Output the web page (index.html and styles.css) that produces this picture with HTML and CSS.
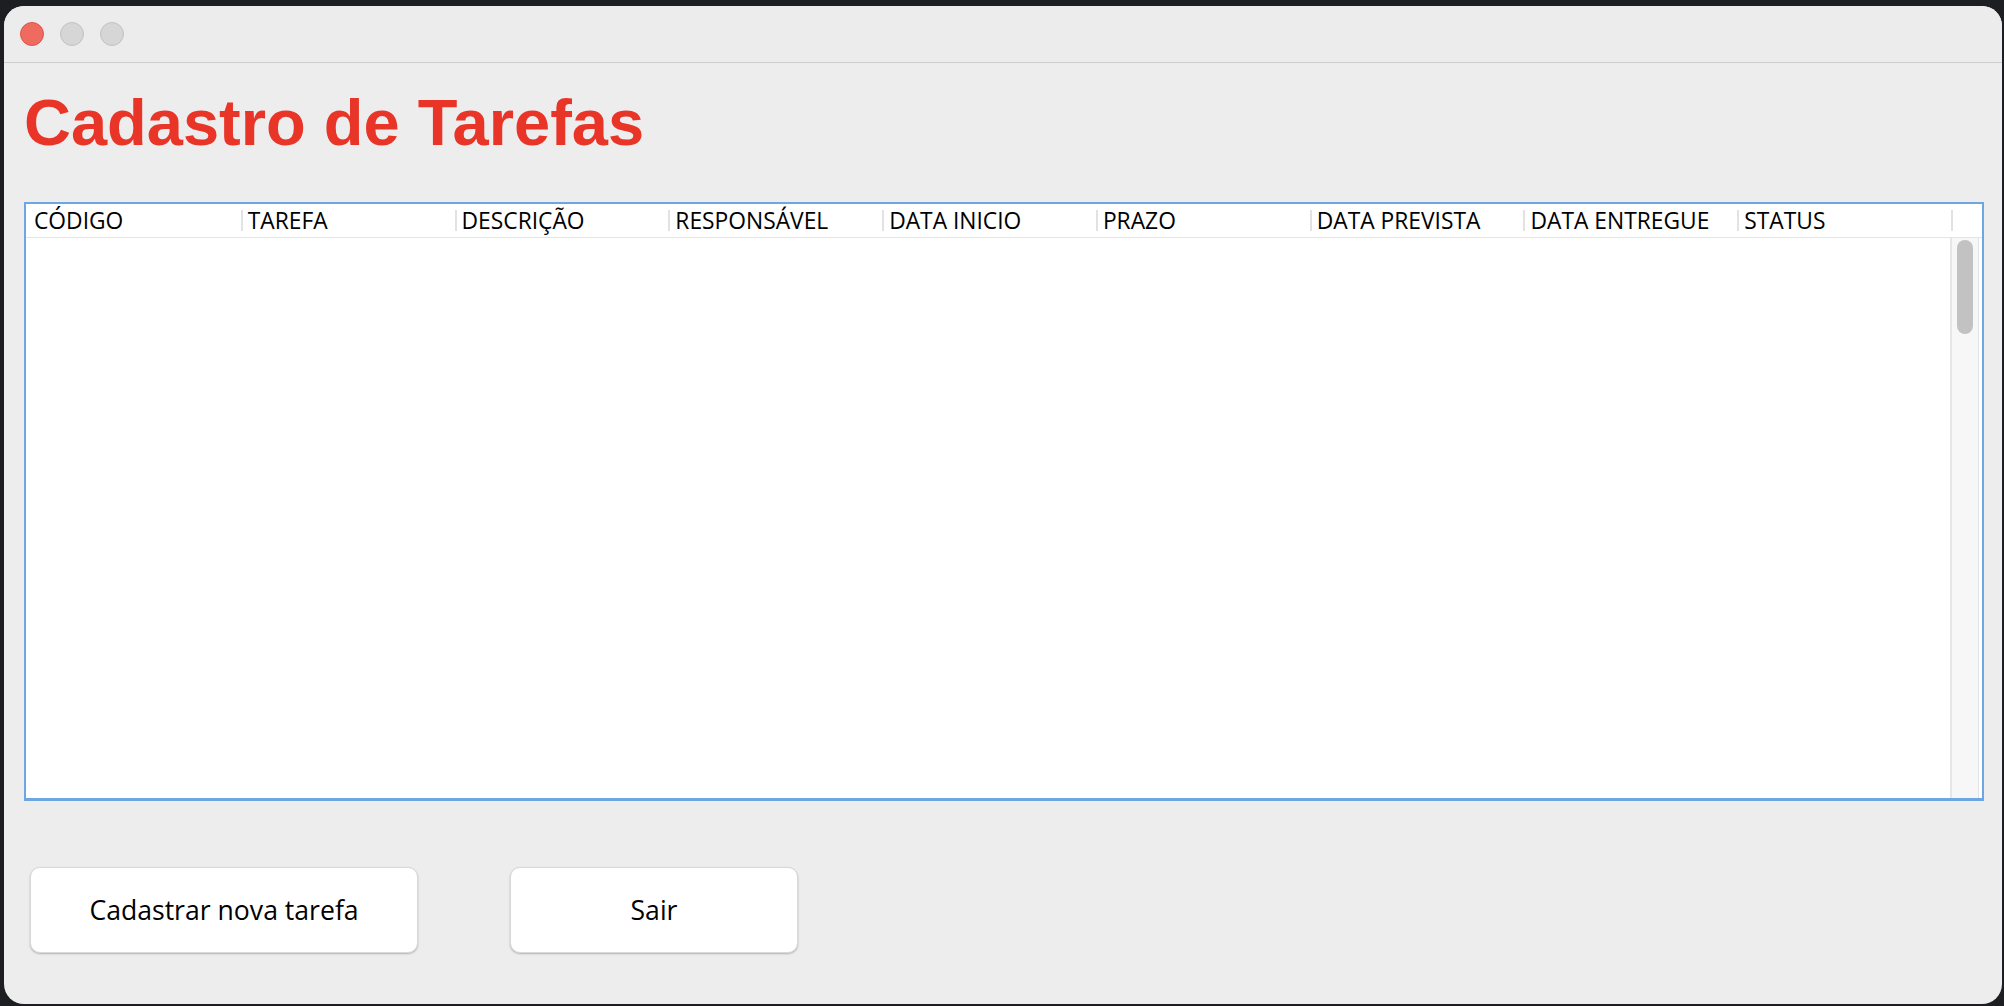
FILE: index.html
```html
<!DOCTYPE html>
<html lang="pt">
<head>
<meta charset="utf-8">
<title>Cadastro de Tarefas</title>
<link rel="stylesheet" href="styles.css">
</head>
<body>
<div class="window">
  <div class="titlebar">
    <span class="light light-red"></span>
    <span class="light"></span>
    <span class="light"></span>
  </div>
  <div class="content">
    <h1 class="title">Cadastro de Tarefas</h1>
    <div class="table">
      <div class="thead">
        <div class="th">CÓDIGO</div>
        <div class="th">TAREFA</div>
        <div class="th">DESCRIÇÃO</div>
        <div class="th">RESPONSÁVEL</div>
        <div class="th">DATA INICIO</div>
        <div class="th">PRAZO</div>
        <div class="th">DATA PREVISTA</div>
        <div class="th">DATA ENTREGUE</div>
        <div class="th">STATUS</div>
        <div class="th corner"></div>
      </div>
      <div class="tbody">
        <div class="rows"></div>
        <div class="track"><div class="thumb"></div></div>
      </div>
    </div>
    <div class="buttons">
      <button class="btn btn-new">Cadastrar nova tarefa</button>
      <button class="btn btn-exit">Sair</button>
    </div>
  </div>
</div>
</body>
</html>
```
FILE: styles.css
```css
html, body {
  margin: 0;
  padding: 0;
}
body {
  width: 2004px;
  height: 1006px;
  background: #1d1e21;
  overflow: hidden;
}
.window {
  margin: 6px 2px 2px 4px;
  height: 998px;
  background: #ededed;
  border-radius: 20px;
  overflow: hidden;
  display: flex;
  flex-direction: column;
}
.titlebar {
  height: 56px;
  flex: none;
  border-bottom: 1px solid #cdcdcd;
  background: #ececec;
  display: flex;
  align-items: center;
  gap: 16px;
  padding-left: 16px;
}
.light {
  width: 22px;
  height: 22px;
  border-radius: 50%;
  background: #d6d6d6;
  border: 1px solid #c2c2c2;
}
.light-red {
  background: #ef6b60;
  border-color: #d9564c;
}
.content {
  flex: 1;
  padding: 0 18px 0 20px;
  display: flex;
  flex-direction: column;
}
.title {
  margin: 27px 0 0 0;
  font-family: "Liberation Sans", Arial, sans-serif;
  font-weight: bold;
  font-size: 65px;
  line-height: 65px;
  color: #e93528;
}
.table {
  margin-top: 47px;
  height: 599px;
  box-sizing: border-box;
  border: 2px solid #6ea6e2;
  border-bottom-width: 3px;
  background: #ffffff;
  display: flex;
  flex-direction: column;
}
.thead {
  height: 33px;
  flex: none;
  display: flex;
  border-bottom: 1px solid #e4e4e4;
  font-family: "Open Sans", "Noto Sans", sans-serif;
  font-size: 22.8px;
  color: #000;
}
.th {
  flex: 1;
  min-width: 0;
  position: relative;
  padding-left: 8px;
  line-height: 33px;
  white-space: nowrap;
}
.th + .th::before {
  content: "";
  position: absolute;
  left: 1px;
  top: 6px;
  height: 21px;
  width: 2px;
  background: #e2e2e2;
}
.th.corner {
  flex: 0 0 32px;
  padding: 0;
}
.tbody {
  flex: 1;
  display: flex;
}
.rows {
  flex: 1;
}
.track {
  width: 26px;
  margin-right: 3px;
  background: #f7f7f7;
  border-left: 2px solid #e6e6e6;
  border-right: 1px solid #e3e3e3;
  display: flex;
  justify-content: center;
  padding-top: 2px;
}
.thumb {
  width: 16px;
  height: 94px;
  border-radius: 8px;
  background: #c2c2c2;
}
.buttons {
  margin-top: 66px;
  padding-left: 6px;
  display: flex;
  gap: 92px;
}
.btn {
  height: 86px;
  background: #ffffff;
  border: 1px solid #d9d9d9;
  border-radius: 10px;
  box-shadow: 0 1px 2px rgba(0, 0, 0, 0.25);
  font-family: "Open Sans", "Noto Sans", sans-serif;
  font-size: 26.6px;
  color: #000;
  padding: 0;
}
.btn-new {
  width: 388px;
}
.btn-exit {
  width: 288px;
}
```
